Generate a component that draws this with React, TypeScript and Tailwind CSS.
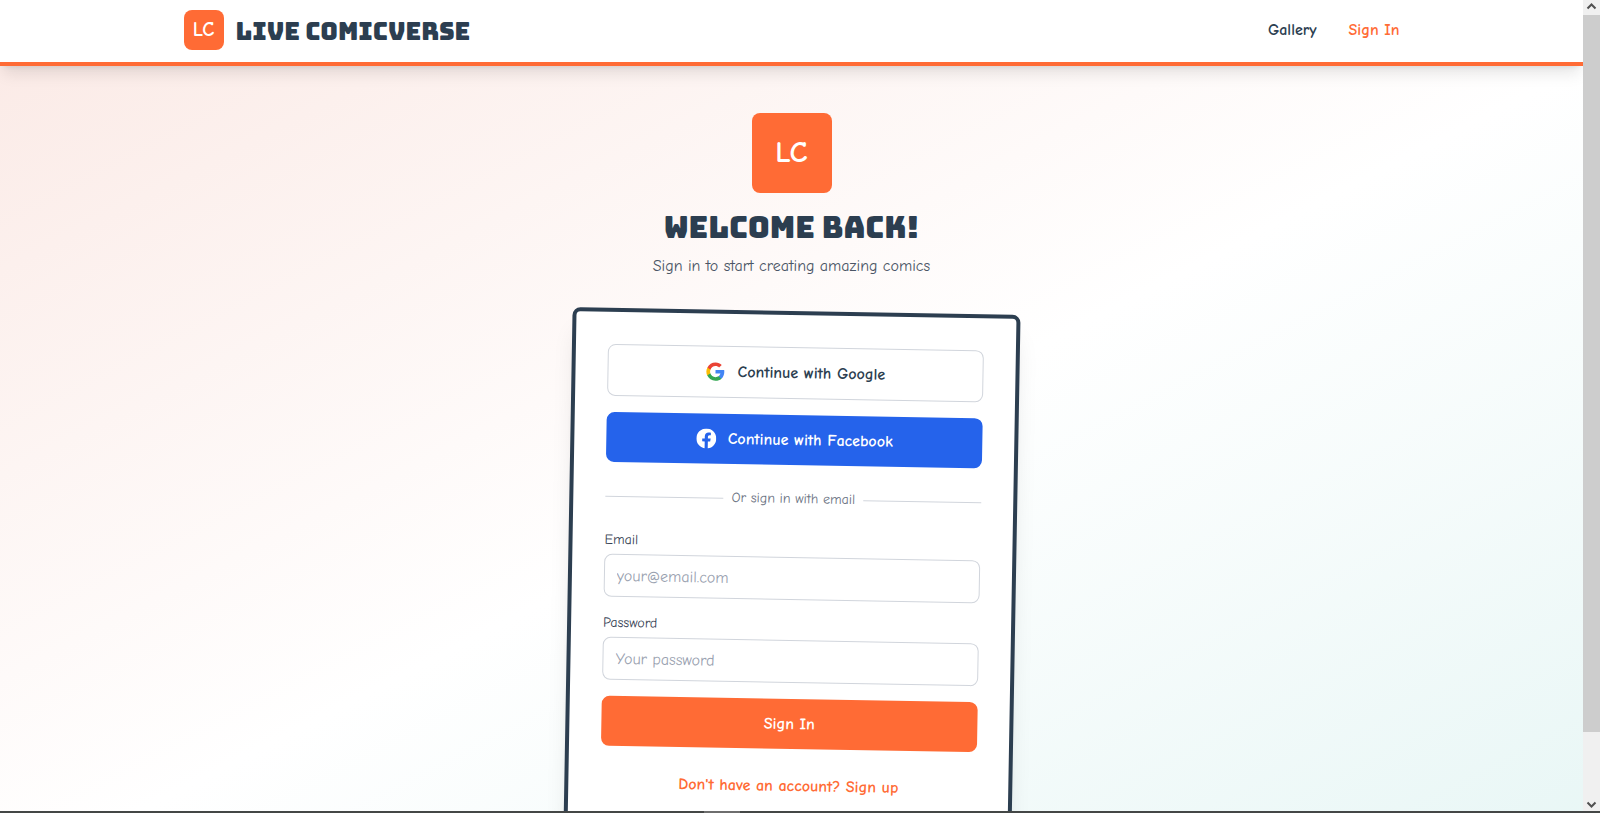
import type { ReactNode } from 'react';

function Logo({ large = false }: { large?: boolean }) {
  return (
    <span
      className={
        large
          ? 'flex size-20 items-center justify-center rounded-lg bg-[#ff6b35] text-3xl font-bold text-white'
          : 'flex size-10 items-center justify-center rounded-lg bg-[#ff6b35] text-xl font-bold text-white'
      }
    >
      LC
    </span>
  );
}

function GoogleIcon() {
  return (
    <svg className="size-5" viewBox="0 0 24 24" aria-hidden="true">
      <path fill="#4285F4" d="M22.56 12.25c0-.78-.07-1.53-.2-2.25H12v4.26h5.92c-.26 1.37-1.04 2.53-2.21 3.31v2.77h3.57c2.08-1.92 3.28-4.74 3.28-8.09z" />
      <path fill="#34A853" d="M12 23c2.97 0 5.46-.98 7.28-2.66l-3.57-2.77c-.98.66-2.23 1.06-3.71 1.06-2.86 0-5.29-1.93-6.16-4.53H2.18v2.84C3.99 20.53 7.7 23 12 23z" />
      <path fill="#FBBC05" d="M5.84 14.09c-.22-.66-.35-1.36-.35-2.09s.13-1.43.35-2.09V7.07H2.18C1.43 8.55 1 10.22 1 12s.43 3.45 1.18 4.93l2.85-2.22.81-.62z" />
      <path fill="#EA4335" d="M12 5.38c1.62 0 3.06.56 4.21 1.64l3.15-3.15C17.45 2.09 14.97 1 12 1 7.7 1 3.99 3.47 2.18 7.07l3.66 2.84c.87-2.6 3.3-4.53 6.16-4.53z" />
    </svg>
  );
}

function FacebookIcon() {
  return (
    <svg className="size-5" viewBox="0 0 24 24" fill="currentColor" aria-hidden="true">
      <path d="M24 12.073c0-6.627-5.373-12-12-12s-12 5.373-12 12c0 5.99 4.388 10.954 10.125 11.854v-8.385H7.078v-3.47h3.047V9.43c0-3.007 1.792-4.669 4.533-4.669 1.312 0 2.686.235 2.686.235v2.953H15.83c-1.491 0-1.956.925-1.956 1.874v2.25h3.328l-.532 3.47h-2.796v8.385C19.612 23.027 24 18.062 24 12.073z" />
    </svg>
  );
}

function Field({ id, label, children }: { id: string; label: string; children: ReactNode }) {
  return (
    <div>
      <label htmlFor={id} className="mb-1 block text-sm text-gray-700">
        {label}
      </label>
      {children}
    </div>
  );
}

const inputClass =
  'block h-[43px] w-full rounded-lg border border-gray-300 bg-white px-3 text-[#2c3e50] placeholder:text-gray-400 focus:outline-none focus:ring-2 focus:ring-[#ff6b35]';

function Header() {
  return (
    <header className="relative z-10 border-b-4 border-[#ff6b35] bg-white shadow-lg">
      <div className="mx-auto flex max-w-7xl items-center justify-between px-8 pt-2.5 pb-3">
        <a href="#home" className="flex items-end gap-3">
          <Logo />
          <span className="font-['Bungee','Inter',sans-serif] text-2xl/9 text-[#2c3e50]">LIVE COMICVERSE</span>
        </a>
        <nav className="flex gap-8 font-bold">
          <a href="#gallery" className="text-[#2c3e50]">Gallery</a>
          <a href="#signin" className="text-[#ff6b35]">Sign In</a>
        </nav>
      </div>
    </header>
  );
}

function SignInCard() {
  return (
    <section className="rotate-1 rounded-lg border-4 border-[#2c3e50] bg-white p-8 shadow-xl">
      <div className="flex flex-col gap-4">
        <button className="flex w-full items-center justify-center gap-3 rounded-lg border border-gray-300 bg-white py-3 font-bold text-[#2c3e50]">
          <GoogleIcon />
          Continue with Google
        </button>
        <button className="flex w-full items-center justify-center gap-3 rounded-lg bg-[#2563eb] py-3 font-bold text-white">
          <FacebookIcon />
          Continue with Facebook
        </button>
      </div>
      <div className="my-6 flex items-center gap-2 text-sm text-gray-500">
        <span className="h-px flex-1 bg-gray-300" />
        Or sign in with email
        <span className="h-px flex-1 bg-gray-300" />
      </div>
      <form className="flex flex-col gap-4">
        <Field id="email" label="Email">
          <input id="email" type="email" placeholder="your@email.com" className={inputClass} />
        </Field>
        <Field id="password" label="Password">
          <input id="password" type="password" placeholder="Your password" className={inputClass} />
        </Field>
        <button type="button" className="w-full rounded-lg bg-[#ff6b35] py-3 font-bold text-white">
          Sign In
        </button>
      </form>
      <div className="mt-6 text-center">
        <button className="font-bold text-[#ff6b35]">Don't have an account? Sign up</button>
      </div>
    </section>
  );
}

function ScrollRail() {
  return (
    <div className="flex w-[17px] shrink-0 flex-col items-center bg-[#f0f0f0] text-[#505050]" aria-hidden="true">
      <svg className="h-[15px] w-[17px] shrink-0" viewBox="0 0 17 15" fill="none" stroke="currentColor" strokeWidth="2">
        <path d="M4.5 8.5l4-4 4 4" />
      </svg>
      <div className="w-full flex-[718] bg-[#cdcdcd]" />
      <div className="flex-[62]" />
      <svg className="h-[17px] w-[17px] shrink-0" viewBox="0 0 17 17" fill="none" stroke="currentColor" strokeWidth="2">
        <path d="M4.5 8.5l4 4 4-4" />
      </svg>
    </div>
  );
}

export default function App() {
  return (
    <div className="flex h-screen flex-col overflow-hidden font-['Comic_Neue','Lato',sans-serif] text-base/[26px]">
      <div className="flex min-h-0 flex-1">
        <div className="min-w-0 flex-1 overflow-hidden">
          <Header />
          <main className="bg-linear-to-br from-[#fbebe7] via-white to-[#e7f6f5] px-4 pt-[47px] pb-12">
            <div className="mx-auto max-w-md">
              <div className="mb-8 flex flex-col items-center text-center">
                <Logo large />
                <h1 className="mt-4 mb-2 font-['Bungee','Inter',sans-serif] text-3xl text-[#2c3e50]">
                  WELCOME BACK!
                </h1>
                <p className="text-gray-600">Sign in to start creating amazing comics</p>
              </div>
              <SignInCard />
            </div>
          </main>
        </div>
        <ScrollRail />
      </div>
      <div className="flex h-0.5 shrink-0 bg-[#444746]" aria-hidden="true">
        <div className="w-[44%]" />
        <div className="w-9 bg-[#6e6e6e]" />
      </div>
    </div>
  );
}
